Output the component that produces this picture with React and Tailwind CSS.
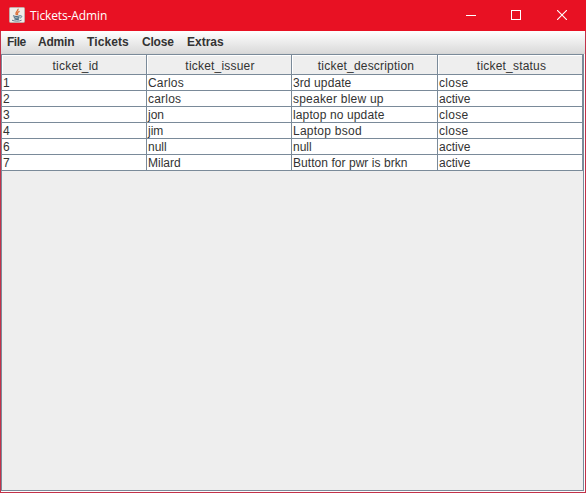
import React from "react";

const menus = [
  { label: "File", cls: "w-[31px] tracking-[-0.5px]" },
  { label: "Admin", cls: "w-[49px] tracking-[-0.2px]" },
  { label: "Tickets", cls: "w-[55px] tracking-[0.1px]" },
  { label: "Close", cls: "w-[45px] tracking-[-0.2px]" },
  { label: "Extras", cls: "w-[50px]" },
];

const columns = [
  { label: "ticket_id", cls: "pl-[3px]" },
  { label: "ticket_issuer", cls: "pl-[2px]" },
  { label: "ticket_description", cls: "pl-[3px]" },
  { label: "ticket_status", cls: "pl-[3px]" },
];

const rows = [
  ["1", "Carlos", "3rd update", "close"],
  ["2", "carlos", "speaker blew up", "active"],
  ["3", "jon", "laptop no update", "close"],
  ["4", "jim", "Laptop bsod", "close"],
  ["6", "null", "null", "active"],
  ["7", "Milard", "Button for pwr is brkn", "active"],
];

const tracking = {
  Carlos: "tracking-[0.2px]",
  carlos: "tracking-[0.2px]",
  "3rd update": "tracking-[0.1px]",
  "speaker blew up": "tracking-[0.22px]",
  "laptop no update": "tracking-[0.13px]",
  "Laptop bsod": "tracking-[0.25px]",
  "Button for pwr is brkn": "tracking-[0.05px]",
  close: "tracking-[0.3px]",
};

const grid = "grid grid-cols-[145px_145px_146px_145px]";

function JavaIcon() {
  return (
    <svg className="-mt-px" width="16" height="16" viewBox="0 0 16 16" fill="none">
      <rect x="0.5" y="0.5" width="15" height="15" rx="1" fill="#efece8" stroke="#c4aba8" />
      <path d="M9 1.8C9.8 4 5.2 4.8 7.6 8.2M10.6 4.4C8 5.4 8.2 6.4 8.8 8" stroke="#dd7038" strokeWidth="1.3" />
      <path d="M4 8.8C6 9.6 9 9.6 11 8.8M4.8 10.6C6.8 11.3 8.8 11.3 10.4 10.6M5.4 12.1C7 12.7 8.6 12.7 10 12.1" stroke="#48687f" strokeWidth="1.1" />
      <path d="M11 8.8C13.6 8.3 13.2 10.7 10.8 11.1M3 13.2C5 14.4 10.6 14.4 12.6 13.2" stroke="#5d7a91" />
    </svg>
  );
}

export default function App() {
  return (
    <div className="flex h-[493px] w-[586px] flex-col overflow-hidden bg-[#e81123] font-['Liberation_Sans',Arial,sans-serif] text-[12px] text-[#333333]">
      <header className="flex h-[31px] shrink-0 items-center pl-[9px] text-white">
        <JavaIcon />
        <h1 className="ml-[5px] flex-1 whitespace-nowrap font-['Open_Sans','Noto_Sans',sans-serif] text-[12px] leading-[16px] tracking-[-0.12px]">
          Tickets-Admin
        </h1>
        <div className="flex h-full items-center pr-[19px] pb-px">
          <svg className="mr-[35px]" width="10" height="10" viewBox="0 0 10 10" stroke="currentColor" shapeRendering="crispEdges"><path d="M0 5.5H10" /></svg>
          <svg className="mr-[36px]" width="10" height="10" viewBox="0 0 10 10" fill="none" stroke="currentColor" shapeRendering="crispEdges"><path d="M.5 .5H9.5V9.5H.5Z" /></svg>
          <svg width="10" height="10" viewBox="0 0 10 10" stroke="currentColor" strokeWidth="1.1"><path d="M0 0L10 10M10 0L0 10" /></svg>
        </div>
      </header>

      <div className="flex min-h-0 flex-1 flex-col border-x border-b border-[#c2324a] bg-white">
        <nav className="flex h-[23px] shrink-0 items-center border-b border-[#d6d6d6] bg-linear-to-b from-white to-[#dadada] pl-[6px] font-bold">
          {menus.map((m) => (
            <span key={m.label} className={`${m.cls} whitespace-nowrap leading-[14px]`}>{m.label}</span>
          ))}
        </nav>

        <main className="mr-px mb-px flex-1 border border-[#7a8a99] bg-[#eeeeee]">
          <div className={`${grid} h-[20px]`}>
            {columns.map((c) => (
              <div key={c.label} className={`${c.cls} border-r border-b border-[#7a8a99] pt-[4px] text-center leading-[15px] tracking-[0.2px] shadow-[inset_1px_1px_0_#ffffff]`}>
                {c.label}
              </div>
            ))}
          </div>
          {rows.map((row) => (
            <div key={row[0]} className={`${grid} h-[16px] bg-white`}>
              {row.map((cell, i) => (
                <div key={i} className={`${tracking[cell] ?? ""} whitespace-nowrap border-r border-b border-[#7a8a99] pt-px pl-px leading-[14px]`}>
                  {cell}
                </div>
              ))}
            </div>
          ))}
        </main>
      </div>
    </div>
  );
}
